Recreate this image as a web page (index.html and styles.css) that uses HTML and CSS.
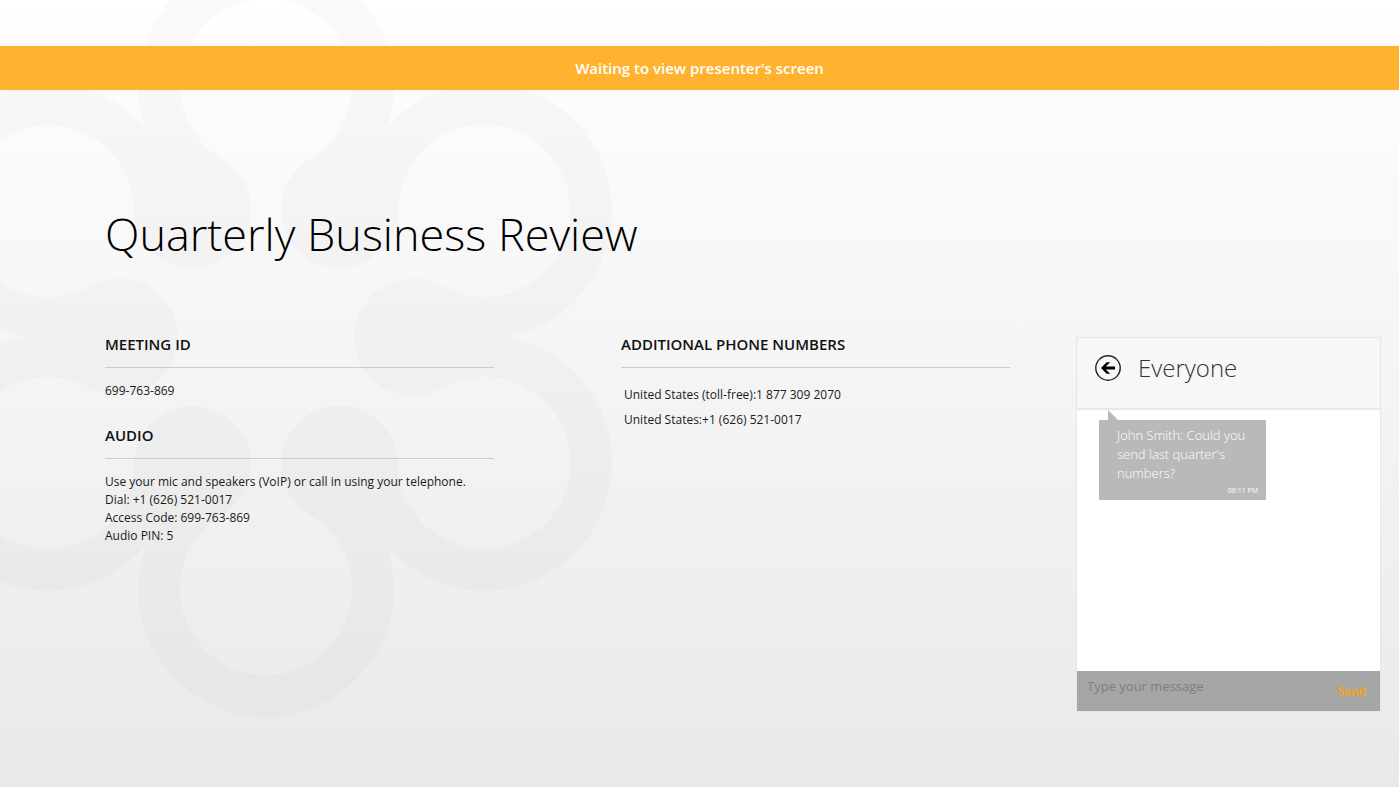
FILE: index.html
```html
<!DOCTYPE html>
<html lang="en">
<head>
<meta charset="utf-8">
<title>Quarterly Business Review</title>
<link rel="stylesheet" href="styles.css">
</head>
<body>
<div class="page">
  <svg class="watermark" viewBox="-384 -384 768 768" aria-hidden="true">
    <path fill-rule="evenodd" d="M-120.5 -208.7A128 128 0 1 1 120.5 -208.7A128 128 0 1 1 241 0A128 128 0 1 1 120.5 208.7A128 128 0 1 1 -120.5 208.7A128 128 0 1 1 -241 0A128 128 0 1 1 -120.5 -208.7Z
      M-43.7 -177.9A86 86 0 1 1 43.7 -177.9A58.7 58.7 0 1 0 132.2 -126.8A86 86 0 1 1 175.9 -51.1A58.7 58.7 0 1 0 175.9 51.1A86 86 0 1 1 132.2 126.8A58.7 58.7 0 1 0 43.7 177.9A86 86 0 1 1 -43.7 177.9A58.7 58.7 0 1 0 -132.2 126.8A86 86 0 1 1 -175.9 51.1A58.7 58.7 0 1 0 -175.9 -51.1A86 86 0 1 1 -132.2 -126.8A58.7 58.7 0 1 0 -43.7 -177.9Z"/>
  </svg>
  <div class="banner" role="status">Waiting to view presenter's screen</div>
  <main class="content">
    <h1 class="title">Quarterly Business Review</h1>
    <div class="layout">
      <div class="details">
        <div class="column">
          <section class="block">
            <h2 class="heading">MEETING ID</h2>
            <p class="text">699-763-869</p>
          </section>
          <section class="block">
            <h2 class="heading">AUDIO</h2>
            <p class="text">Use your mic and speakers (VoIP) or call in using your telephone.</p>
            <p class="text">Dial: +1 (626) 521-0017</p>
            <p class="text">Access Code: 699-763-869</p>
            <p class="text">Audio PIN: 5</p>
          </section>
        </div>
        <section class="column">
          <h2 class="heading">ADDITIONAL PHONE NUMBERS</h2>
          <ul class="phones">
            <li>United States (toll-free):1 877 309 2070</li>
            <li>United States:+1 (626) 521-0017</li>
          </ul>
        </section>
      </div>
      <aside class="chat">
        <header class="chat-head">
          <button class="back" type="button" aria-label="Back">
            <svg viewBox="0 0 26 26"><circle cx="13" cy="13" r="12.2" fill="none" stroke="#222" stroke-width="1.4"/><path d="M6 13L11.6 7.2H15.2L10.8 11.6H20V14.4H10.8L15.2 18.8H11.6Z" fill="#000"/></svg>
          </button>
          <h2 class="chat-title">Everyone</h2>
        </header>
        <div class="messages">
          <div class="bubble">
            <p class="bubble-text">John Smith: Could you send last quarter's numbers?</p>
            <time class="bubble-time">06:11 PM</time>
          </div>
        </div>
        <form class="composer">
          <input class="message-input" type="text" placeholder="Type your message" aria-label="Type your message">
          <button class="send" type="button">Send</button>
        </form>
      </aside>
    </div>
  </main>
</div>
</body>
</html>
```
FILE: styles.css
```css
* { box-sizing: border-box; }
body {
  margin: 0;
  font-family: "Open Sans", "Noto Sans", sans-serif;
  color: #1a1a1a;
}
h1, h2, p, ul { margin: 0; padding: 0; }
.page {
  position: relative;
  min-height: 100vh;
  padding-top: 46px;
  overflow: hidden;
  background: linear-gradient(#ffffff, #fcfcfc 12%, #f4f4f4 50%, #e9e9e9);
}
.watermark {
  position: absolute;
  left: -118px;
  top: -47px;
  width: 768px;
  height: 768px;
  fill: rgba(0, 0, 0, 0.018);
}
.banner {
  position: relative;
  line-height: 44px;
  background: #ffb22f;
  color: #fff;
  font-size: 15px;
  font-weight: 600;
  text-align: center;
}
.content {
  position: relative;
  padding: 112px 18px 76px 105px;
}
.title {
  font-size: 45px;
  font-weight: 300;
  line-height: 64px;
  color: #000;
}
.layout {
  display: flex;
  align-items: flex-start;
  gap: 66px;
  padding-top: 71px;
}
.details {
  flex: 1;
  display: grid;
  grid-template-columns: 1fr 1fr;
  gap: 127px;
}
.block + .block { padding-top: 28px; }
.heading {
  padding-bottom: 16px;
  margin-bottom: 14px;
  border-bottom: 1px solid #cbcbcb;
  font-size: 15px;
  font-weight: 600;
  line-height: 14px;
  color: #111;
}
.text, .phones {
  font-size: 12px;
  line-height: 18px;
}
.phones {
  padding: 0 3px;
  line-height: 25px;
  list-style: none;
}
.chat {
  width: 305px;
  border: 1px solid #e6e6e6;
  background: #fff;
}
.chat-head {
  display: flex;
  align-items: center;
  gap: 17px;
  height: 72px;
  padding: 0 18px 10px;
  border-bottom: 2px solid #e9e9e9;
  background: #f7f7f7;
}
.back {
  width: 26px;
  height: 26px;
  padding: 0;
  border: 0;
  background: none;
}
.back svg { display: block; }
.chat-title {
  font-size: 24px;
  font-weight: 300;
  line-height: 32px;
  color: #333;
}
.messages {
  height: 261px;
  padding: 10px 22px;
}
.bubble {
  position: relative;
  width: 167px;
  padding: 6px 8px 2px 18px;
  background: #b9b9b9;
  color: #fff;
}
.bubble::before {
  content: "";
  position: absolute;
  left: 9px;
  top: -10px;
  width: 10px;
  height: 10px;
  background: #b9b9b9;
  clip-path: polygon(0 0, 100% 100%, 0 100%);
}
.bubble-text {
  font-size: 13px;
  font-weight: 300;
  line-height: 19px;
}
.bubble-time {
  display: block;
  font-size: 7px;
  line-height: 15px;
  text-align: right;
}
.composer {
  display: flex;
  height: 40px;
  background: #a6a6a6;
}
.message-input {
  flex: 1;
  min-width: 0;
  padding: 0 10px 10px;
  border: 0;
  outline: 0;
  background: none;
  font: 13px "Open Sans", "Noto Sans", sans-serif;
  color: #333;
}
.message-input::placeholder { color: #7f7f7f; opacity: 1; }
.send {
  padding: 0 14px;
  border: 0;
  background: none;
  font: 600 12px "Open Sans", "Noto Sans", sans-serif;
  color: #ffa200;
}
```
